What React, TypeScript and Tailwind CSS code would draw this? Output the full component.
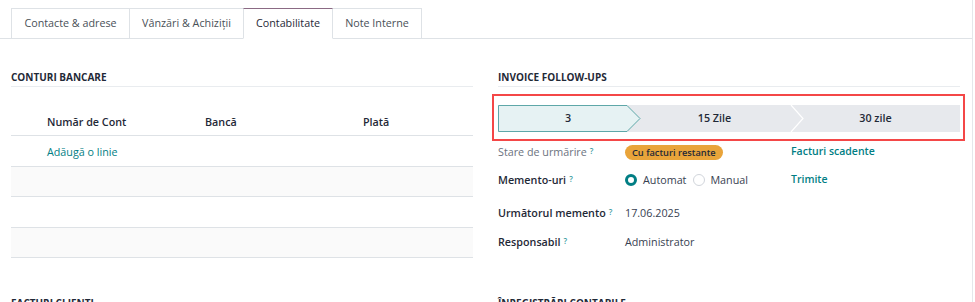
import React from "react";

const teal = "text-[#017e84]";

function Q() {
  return <sup className="ml-[3px] text-[8px] font-semibold text-[#3d9ca1] relative -top-[2px]">?</sup>;
}

function Tabs() {
  const tabs = ["Contacte & adrese", "Vânzări & Achiziții", "Contabilitate", "Note Interne"];
  const widths = ["w-[119px]", "w-[115px]", "w-[90px]", "w-[90px]"];
  return (
    <div className="flex pl-[11px] pt-[8px] border-b border-[#dee2e6]">
      {tabs.map((t, i) => {
        const active = i === 2;
        return (
          <div
            key={t}
            className={
              "h-[31px] -mb-px flex items-center justify-center border text-[10.75px] " +
              widths[i] +
              (i > 0 ? " -ml-px" : "") +
              (active
                ? " border-[#dee2e6] border-t-[#8b6a84] border-b-white bg-white text-[#1f2937] relative z-10"
                : " border-[#dee2e6] text-[#495057]")
            }
          >
            {t}
          </div>
        );
      })}
    </div>
  );
}

function SectionTitle({ children }: { children: React.ReactNode }) {
  return (
    <div className="text-[10px] font-bold leading-[14px] text-[#1f2937] pb-[2px] border-b border-[#e9ecef] uppercase">
      {children}
    </div>
  );
}

function BankTable() {
  return (
    <div className="mt-[19px] text-[10.75px]">
      <div className="grid grid-cols-[36px_158px_158px_1fr] h-[30px] items-center pt-[3px] border-b border-[#dee2e6] font-semibold text-[#1f2937]">
        <div />
        <div>Număr de Cont</div>
        <div>Bancă</div>
        <div>Plată</div>
      </div>
      <div className="grid grid-cols-[36px_1fr] h-[30.5px] items-center pt-[2px] border-b border-[#dee2e6]">
        <div />
        <div className={teal}>Adăugă o linie</div>
      </div>
      <div className="h-[30.5px] border-b border-[#dee2e6] bg-[#fafafa]" />
      <div className="h-[30.5px] border-b border-[#dee2e6] bg-white" />
      <div className="h-[30px] border-b border-[#dee2e6] bg-[#fafafa]" />
    </div>
  );
}

function StatusBar() {
  return (
    <div className="relative h-[27px] w-full">
      <svg className="absolute inset-0" width="462" height="27" viewBox="0 0 462 27">
        <rect x="0" y="0" width="462" height="27" fill="#e7e9ed" />
        <path d="M293 0 L305 13.5 L293 27" fill="none" stroke="#ffffff" strokeWidth="1.2" />
        <path d="M0.5 0.5 H129 L142 13.5 L129 26.5 H0.5 Z" fill="#e6f2f3" stroke="#5ea7a8" strokeWidth="1" />
      </svg>
      <div className="relative flex h-full items-center text-[10.75px] font-semibold text-[#1f2937]">
        <div className="w-[140px] text-center">3</div>
        <div className="w-[153px] text-center">15 Zile</div>
        <div className="flex-1 text-center">30 zile</div>
      </div>
    </div>
  );
}

function Radio({ checked }: { checked: boolean }) {
  return checked ? (
    <span className="inline-block w-[12px] h-[12px] rounded-full border-[3.5px] border-[#017e84] bg-white" />
  ) : (
    <span className="inline-block w-[12px] h-[12px] rounded-full border border-[#d1d5db] bg-white" />
  );
}

function FollowUps() {
  return (
    <div>
      <SectionTitle>Invoice Follow-ups</SectionTitle>
      <div className="mt-[7px] -ml-[6px] -mr-[5px] border-2 border-[#f44747] pl-[4px] pr-[3px] pt-[9px] pb-[7px]">
        <StatusBar />
      </div>
      <div className="text-[10.75px] text-[#1f2937]">
        <div className="grid grid-cols-[127px_166px_1fr] items-center h-[20px] mt-[1px]">
          <div className="text-[#6b7280]">
            Stare de urmărire<Q />
          </div>
          <div>
            <span className="inline-flex items-center h-[15px] px-[7px] rounded-full bg-[#e9a43a] text-[9.25px] font-semibold text-[#1f2937]">
              Cu facturi restante
            </span>
          </div>
          <div className={"font-semibold text-[10.5px] " + teal}>Facturi scadente</div>
        </div>
        <div className="grid grid-cols-[127px_166px_1fr] items-center h-[20px] mt-[8px]">
          <div className="font-semibold">
            Memento-uri<Q />
          </div>
          <div className="flex items-center text-[#374151]">
            <Radio checked />
            <span className="ml-[6px]">Automat</span>
            <span className="ml-[7px] flex items-center">
              <Radio checked={false} />
            </span>
            <span className="ml-[5px]">Manual</span>
          </div>
          <div className={"font-semibold text-[10.5px] " + teal}>Trimite</div>
        </div>
        <div className="grid grid-cols-[127px_1fr] items-center h-[20px] mt-[13px]">
          <div className="font-semibold">
            Următorul memento<Q />
          </div>
          <div className="text-[#374151]">17.06.2025</div>
        </div>
        <div className="grid grid-cols-[127px_1fr] items-center h-[20px] mt-[9px]">
          <div className="font-semibold">
            Responsabil<Q />
          </div>
          <div className="text-[#374151]">Administrator</div>
        </div>
      </div>
    </div>
  );
}

export default function App() {
  return (
    <div
      className="w-[975px] h-[302px] overflow-hidden bg-white"
      style={{ fontFamily: '"Open Sans", "Noto Sans", sans-serif' }}
    >
      <div className="w-[973px] h-full border-r border-[#e5e7eb]">
        <Tabs />
        <div className="grid grid-cols-[462px_462px] gap-x-[25px] pl-[11px] pt-[31px]">
          <div>
            <SectionTitle>Conturi bancare</SectionTitle>
            <BankTable />
          </div>
          <FollowUps />
          <div className="mt-[38px]">
            <SectionTitle>Facturi clienti</SectionTitle>
          </div>
          <div className="mt-[38px]">
            <SectionTitle>Înregistrări contabile</SectionTitle>
          </div>
        </div>
      </div>
    </div>
  );
}
